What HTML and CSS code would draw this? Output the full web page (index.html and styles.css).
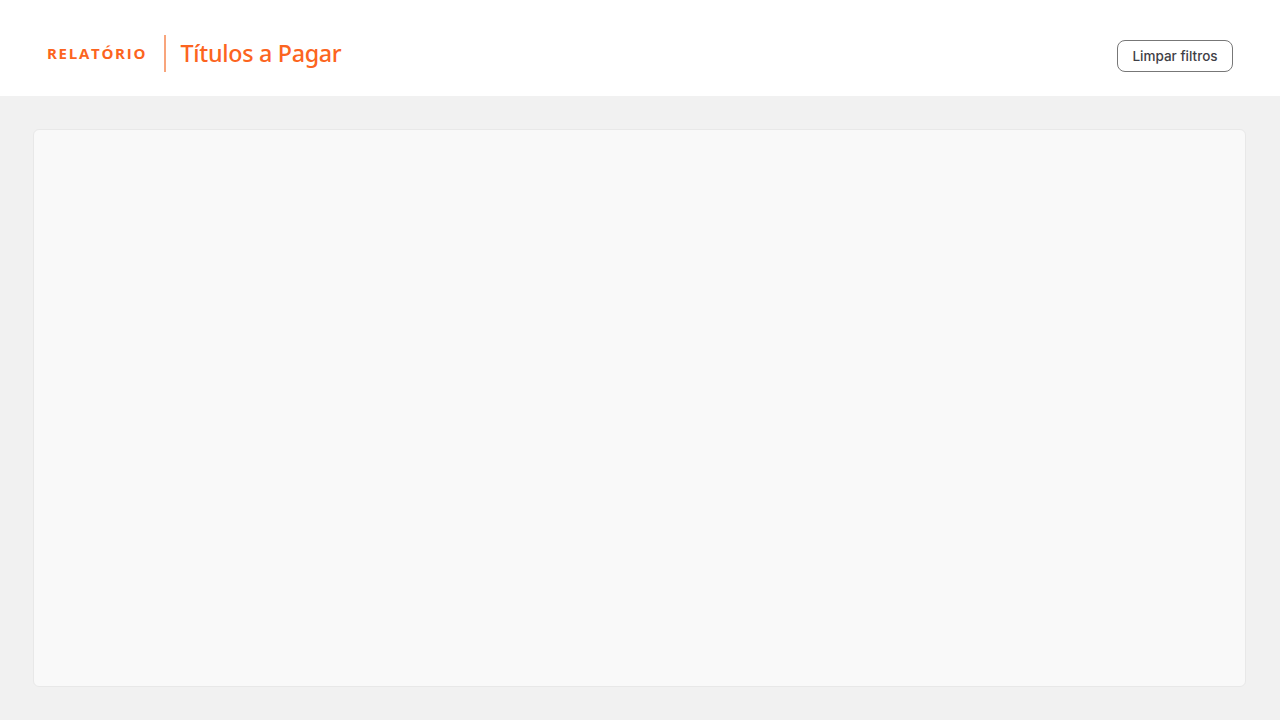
FILE: index.html
```html
<!DOCTYPE html>
<html lang="pt-BR">
<head>
    <meta charset="UTF-8">
    <meta name="viewport" content="width=device-width, initial-scale=1.0">
    <title>Relatório - Títulos a Pagar</title>
    <link rel="stylesheet" href="styles.css">
</head>
<body>
    <header class="topbar">
        <div class="brand">
            <span class="brand-label">RELATÓRIO</span>
            <span class="brand-divider"></span>
            <h1 class="brand-title">Títulos a Pagar</h1>
        </div>
        <button class="btn-clear" type="button">Limpar filtros</button>
    </header>

    <main class="content">
        <section class="report-panel"></section>
    </main>
</body>
</html>
```

FILE: styles.css
```css
* {
    margin: 0;
    padding: 0;
    box-sizing: border-box;
}

html, body {
    height: 100%;
}

body {
    background-color: #f1f1f1;
    font-family: "Open Sans", Arial, sans-serif;
    color: #333;
    display: flex;
    flex-direction: column;
}

.topbar {
    height: 96px;
    background-color: #fff;
    display: flex;
    justify-content: space-between;
    padding: 0 47px 0 47px;
}

.brand {
    display: flex;
    align-items: center;
    padding-top: 10px;
}

.brand-label {
    color: #fc6420;
    font-size: 15px;
    font-weight: 700;
    letter-spacing: 1.72px;
    margin-top: -1px;
}

.brand-divider {
    width: 1.5px;
    height: 37px;
    background-color: #f8a57c;
    margin: 0 15px 0 17px;
}

.brand-title {
    color: #fc6420;
    font-family: "Noto Sans", "Open Sans", sans-serif;
    font-size: 23.3px;
    font-weight: 500;
    letter-spacing: -0.3px;
}

.btn-clear {
    align-self: flex-start;
    margin-top: 40px;
    width: 116px;
    height: 32px;
    background-color: #fff;
    border: 1px solid #777;
    border-radius: 8px;
    font-family: Inter, Roboto, sans-serif;
    font-size: 13.5px;
    font-weight: 500;
    color: #3f3f46;
    cursor: pointer;
}

.content {
    flex: 1;
    padding: 33px 34px 33px 33px;
    display: flex;
}

.report-panel {
    flex: 1;
    background-color: #f9f9f9;
    border: 1px solid #e8e8e8;
    border-radius: 6px;
}
```
